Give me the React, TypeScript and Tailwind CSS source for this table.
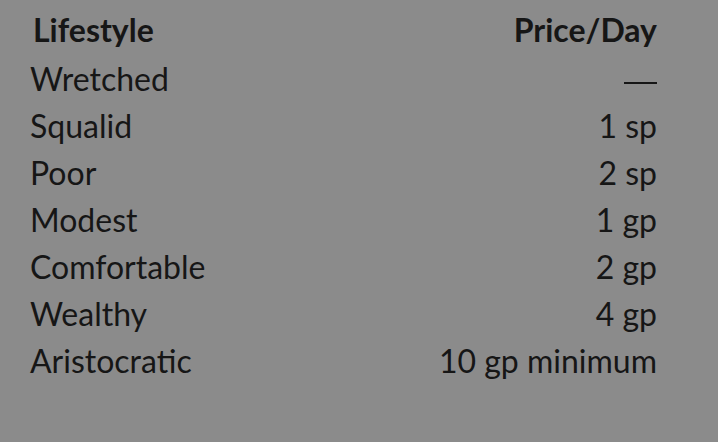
const rows: [string, string | null][] = [
	["Wretched", null],
	["Squalid", "1 sp"],
	["Poor", "2 sp"],
	["Modest", "1 gp"],
	["Comfortable", "2 gp"],
	["Wealthy", "4 gp"],
	["Aristocratic", "10 gp minimum"],
];

export default function App() {
	return (
		<div className="h-[442px] w-[718px] overflow-hidden bg-[#8b8b8b] pt-[6px] pr-[61px] pl-[30px] font-['Lato',sans-serif] text-[32px] text-[#161616]">
			<div className="mb-[2px] flex h-[47px] items-center justify-between leading-[47px] font-bold">
				<span className="pl-[3px]">Lifestyle</span>
				<span>Price/Day</span>
			</div>
			{rows.map(([name, price]) => (
				<div
					key={name}
					className="flex h-[47px] items-center justify-between leading-[47px]"
				>
					<span>{name}</span>
					<span>
						{price ?? (
							<span className="mb-[7px] inline-block h-[2px] w-[33px] bg-[#161616] align-baseline" />
						)}
					</span>
				</div>
			))}
		</div>
	);
}
